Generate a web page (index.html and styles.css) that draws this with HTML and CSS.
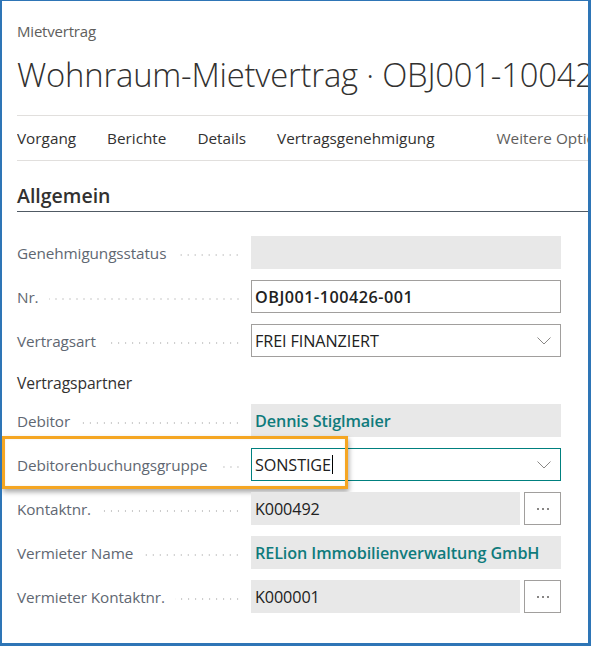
FILE: index.html
```
<!DOCTYPE html>
<html lang="de">
<head>
<meta charset="utf-8">
<title>Wohnraum-Mietvertrag</title>
<link rel="stylesheet" href="styles.css">
</head>
<body>
<div class="frame">
  <div class="crumb">Mietvertrag</div>
  <h1 class="title">Wohnraum-Mietvertrag · OBJ001-100426-001</h1>
  <nav class="actions">
    <span class="act">Vorgang</span>
    <span class="act">Berichte</span>
    <span class="act">Details</span>
    <span class="act">Vertragsgenehmigung</span>
    <span class="sep"></span>
    <span class="act more">Weitere Optionen</span>
  </nav>
  <h2 class="section">Allgemein</h2>
  <div class="fields">
    <div class="row">
      <div class="label"><span class="ltext">Genehmigungsstatus</span><span class="dots"></span></div>
      <div class="box ro"></div>
    </div>
    <div class="row">
      <div class="label"><span class="ltext">Nr.</span><span class="dots"></span></div>
      <div class="box edit"><span class="val bold">OBJ001-100426-001</span></div>
    </div>
    <div class="row">
      <div class="label"><span class="ltext">Vertragsart</span><span class="dots"></span></div>
      <div class="box edit"><span class="val">FREI FINANZIERT</span>
        <svg class="chev" width="14" height="8" viewBox="0 0 14 8"><polyline points="0.5,0.5 7,7 13.5,0.5" fill="none" stroke="#8a8886" stroke-width="1"/></svg>
      </div>
    </div>
    <div class="group">Vertragspartner</div>
    <div class="row">
      <div class="label"><span class="ltext">Debitor</span><span class="dots"></span></div>
      <div class="box ro"><span class="val link">Dennis Stiglmaier</span></div>
    </div>
    <div class="row hl-row">
      <div class="label"><span class="ltext">Debitorenbuchungsgruppe</span><span class="dots"></span></div>
      <div class="box edit focus"><span class="val">SONSTIGE</span><span class="caret"></span>
        <svg class="chev" width="14" height="8" viewBox="0 0 14 8"><polyline points="0.5,0.5 7,7 13.5,0.5" fill="none" stroke="#8a8886" stroke-width="1"/></svg>
      </div>
      <div class="highlight"></div>
    </div>
    <div class="row">
      <div class="label"><span class="ltext">Kontaktnr.</span><span class="dots"></span></div>
      <div class="combo">
        <div class="box ro"><span class="val">K000492</span></div>
        <div class="btn"><span class="d"></span><span class="d"></span><span class="d"></span></div>
      </div>
    </div>
    <div class="row">
      <div class="label"><span class="ltext">Vermieter Name</span><span class="dots"></span></div>
      <div class="box ro"><span class="val link">RELion Immobilienverwaltung GmbH</span></div>
    </div>
    <div class="row">
      <div class="label"><span class="ltext">Vermieter Kontaktnr.</span><span class="dots"></span></div>
      <div class="combo">
        <div class="box ro"><span class="val">K000001</span></div>
        <div class="btn"><span class="d"></span><span class="d"></span><span class="d"></span></div>
      </div>
    </div>
  </div>
</div>
</body>
</html>
```
FILE: styles.css
```
* { box-sizing: border-box; }
html, body { margin: 0; padding: 0; background: #fff; }
body {
  font-family: "Open Sans", "Noto Sans", "Liberation Sans", sans-serif;
  color: #323130;
}
.frame {
  width: 591px;
  height: 646px;
  border-style: solid;
  border-color: #2e75b6;
  border-width: 1px 3px 3px 2px;
  padding: 21px 0 0 15px;
  overflow: hidden;
  position: relative;
}
.crumb {
  font-size: 15px;
  line-height: 18px;
  color: #605e5c;
  letter-spacing: -0.2px;
}
.title {
  margin: 15px 0 0 0;
  font-size: 32.8px;
  font-weight: 300;
  line-height: 40px;
  color: #323130;
  white-space: nowrap;
  overflow: hidden;
  letter-spacing: -0.2px;
}
.actions {
  margin-top: 20px;
  border-top: 1px solid #e1dfdd;
  border-bottom: 1px solid #e1dfdd;
  height: 46px;
  display: flex;
  align-items: center;
  white-space: nowrap;
  overflow: hidden;
  font-size: 15.3px;
}
.act { margin-right: 31px; color: #323130; }
.act.more { color: #605e5c; margin-right: 0; }
.sep {
  width: 1px;
  height: 25px;
  background: #a8a6a4;
  margin: 0 31px 0 0;
}
.section {
  margin: 22px 0 0 0;
  font-size: 19.5px;
  font-weight: 600;
  line-height: 26px;
  padding-bottom: 2px;
  border-bottom: 1px solid #505a64;
  color: #323130;
}
.fields { margin-top: 24px; padding-right: 27px; }
.row {
  display: flex;
  height: 33px;
  margin-bottom: 11px;
  align-items: center;
  position: relative;
}
.label {
  width: 234px;
  flex: none;
  display: flex;
  align-items: center;
  font-size: 15.3px;
  color: #5f6772;
  padding-right: 10px;
  letter-spacing: -0.1px;
}
.ltext { white-space: nowrap; }
.dots {
  flex: 1;
  height: 4px;
  margin: 5px 0 0 10px;
  background-image: radial-gradient(circle, #c8c8c8 0.8px, transparent 1.1px);
  background-size: 7px 4px;
  background-repeat: repeat-x;
  background-position: right center;
}
.box {
  flex: 1;
  height: 33px;
  display: flex;
  align-items: center;
  padding: 0 4px;
  font-size: 16.2px;
  color: #212121;
  position: relative;
  letter-spacing: -0.1px;
}
.box.ro { background: #e8e8e8; }
.box.edit { border: 1px solid #a19f9d; background: #fff; padding: 0 3px; }
.box.focus { border-color: #00807f; }
.val { white-space: nowrap; }
.val.bold { font-weight: 600; letter-spacing: 0.5px; }
.val.link { font-weight: 600; color: #0f7b7c; }
.caret {
  width: 1px;
  height: 19px;
  background: #000;
  margin-left: 1px;
}
.chev { position: absolute; right: 9px; top: 12px; }
.combo { flex: 1; display: flex; height: 33px; gap: 4px; }
.btn {
  width: 37px;
  flex: none;
  border: 1px solid #a19f9d;
  background: #fff;
  display: flex;
  align-items: center;
  justify-content: center;
  gap: 3px;
}
.btn .d { width: 2px; height: 2px; border-radius: 50%; background: #605e5c; }
.group {
  margin: 0 0 11px 0;
  padding-top: 5px;
  font-size: 15.7px;
  line-height: 20px;
  color: #323130;
  letter-spacing: -0.1px;
}
.highlight {
  position: absolute;
  left: -15px;
  top: -12px;
  width: 346px;
  height: 53px;
  border: 3.5px solid #f5a623;
  box-shadow: 1px 3px 5px rgba(0,0,0,0.35), inset 0 0 2px rgba(0,0,0,0.1);
  pointer-events: none;
}
```
